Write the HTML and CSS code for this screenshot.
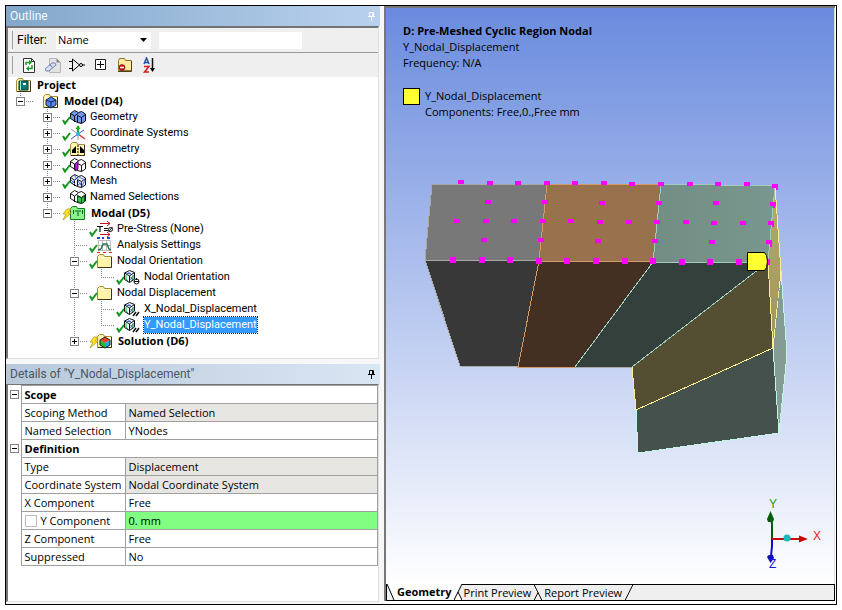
FILE: index.html
```html
<!DOCTYPE html>
<html lang="en">
<head>
<meta charset="utf-8">
<title>Mechanical - Y_Nodal_Displacement</title>
<link rel="stylesheet" href="styles.css">
</head>
<body>
<svg class="defs" aria-hidden="true">
  <symbol id="check" viewBox="0 0 24 16"><path d="M1 11l2 3.500L8 8" fill="none" stroke="#12961c" stroke-width="2"/></symbol>
  <symbol id="bolt" viewBox="0 0 24 16"><path d="M5 4h4L6 8h3L1 15l3-6H1z" fill="#ffe81c" stroke="#b89a20" stroke-width=".8"/></symbol>
  <symbol id="folder" viewBox="0 0 24 16"><path d="M8.500 3.500l2-2h4l1 2h7v11h-14z" fill="#fff3a8" stroke="#a58c37"/><path d="M9.500 4.500h12v9" fill="none" stroke="#fffbd8"/><path d="M9 14.500h13.500V4" fill="none" stroke="#3e3516"/></symbol>
  <symbol id="cubes" viewBox="0 0 24 16"><path d="M8.500 4.500l4-3 4 2 3-1 4 2.500v7l-4 2.500-4-1-3-1.500-4-2.500z" stroke="#111" stroke-linejoin="round"/><path d="M8.500 4.500l4 2.500 4-3M12.500 7v6M15.500 6.500l4 2 4-3M19.500 8.500v6M15.500 6.500v7" fill="none" stroke="#111"/></symbol>
  <symbol id="nodecube" viewBox="0 0 24 16"><path d="M8.500 4l5-2.500 5 2v6.500l-5 3.500-5-3z" fill="#effff0" stroke="#111"/><path d="M8.500 4l5 3 5-3.500M13.500 7v6.500" fill="none" stroke="#111"/><path d="M10 4l5 1M12 2.500l3 3M14.500 8l3 3M17.500 6l-3 5" stroke="#3a58d8"/><path d="M10 6v4l2 2M15 9l2-2v3l-2 2" fill="none" stroke="#1aa638"/></symbol>
  <symbol id="pin" viewBox="0 0 8 10"><path d="M1.500 5.500V1.500h4v4M4.500 1v5M0 5.500h7M3.500 6v4" fill="none" stroke="currentColor"/></symbol>
</svg>
<main class="window">
  <div class="side">
    <section class="panel outline">
      <header class="title"><h2>Outline</h2><button class="pin" aria-label="Pin Outline"><svg><use href="#pin"/></svg></button></header>
      <div class="body">
        <div class="bar filter">
          <label for="by">Filter:</label>
          <div class="combo"><select id="by"><option>Name</option></select><svg viewBox="0 0 8 4"><path d="M0 0h7L3.500 4z"/></svg></div>
          <input type="text" aria-label="Filter text">
        </div>
        <div class="bar tools">
          <button aria-label="Refresh"><svg viewBox="0 0 16 16"><path d="M2.500 1.500h8l3 3v11h-11z" fill="#fff" stroke="#333"/><path d="M10.500 1.500v3h3" fill="none" stroke="#333"/><path d="M5 8V5.500h3M11 8v3.500H8" fill="none" stroke="#159b25" stroke-width="1.500"/><path d="M8 3l3 2.500L8 8zM8 9l-3 2.500L8 14z" fill="#159b25"/></svg></button>
          <button aria-label="Clear"><svg viewBox="0 0 16 16"><path d="M4.500 1.500h7l4 4v10h-11z" fill="#e3e3e3" stroke="#b5b5b5"/><path d="M11.500 1.500v4h4z" fill="#888"/><path d="M0 12l7-6q4-1 4 2l-7 6q-4 1-4-2z" fill="#d8def5" stroke="#7783b8"/><path d="M4 8q3 0 3.500 3" fill="none" stroke="#7783b8"/></svg></button>
          <button aria-label="Model state"><svg viewBox="0 0 16 16"><path d="M0 4.500h3M0 11.500h3M3.500 2v12l7-6zM13 8h3" fill="none" stroke="#000"/><circle cx="12" cy="8" r="1.500" fill="#fff" stroke="#000"/></svg></button>
          <button aria-label="Expand all"><svg viewBox="0 0 16 16"><path d="M2.500 2.500h10v10h-10z" fill="#fff" stroke="#222"/><path d="M4 7.500h7M7.500 4v7" stroke="#000"/></svg></button>
          <button aria-label="Hide folders"><svg viewBox="0 0 16 16"><path d="M1.500 3.500l1-2h5l1 2h6v10h-13z" fill="#ffeaa0" stroke="#8c742a"/><path d="M1 14.500h13.500V4" fill="none" stroke="#4d4120"/><circle cx="5" cy="10.500" r="3" fill="#d5121c" stroke="#6d1014" stroke-width=".6"/><path d="M3 10.500h4" stroke="#fff" stroke-width="1.500"/></svg></button>
          <button aria-label="Sort A to Z"><svg viewBox="0 0 16 16"><path d="M3 7l2.500-6L8 7M4 5.500h3" fill="none" stroke="#2450a8" stroke-width="1.500"/><path d="M3 9.500h5L3.500 15H8" fill="none" stroke="#d21b22" stroke-width="1.500"/><path d="M11.500 1v11" stroke="#111" stroke-width="1.500"/><path d="M9 11h5l-2.500 4z"/></svg></button>
        </div>
        <div class="tree">
          <div class="row"><svg class="ico" viewBox="0 0 24 16"><use href="#folder"/><path d="M11 4h9v9h-9z" fill="#087a70" stroke="#043f3b"/><path d="M12.500 4v9" stroke="#8fe8cf"/><path d="M15 6h3v2h-3z" fill="#fff"/></svg><b>Project</b></div>
          <ul>
            <li><div class="row"><span class="cell"><button class="exp" aria-label="Collapse Model"></button></span><svg class="ico" viewBox="0 0 24 16"><use href="#folder"/><path d="M11 7l5-3 5 3v5l-5 3-5-3z" fill="#5487ed" stroke="#142254"/><path d="M11 7l5 2 5-2M16 9v5" fill="none" stroke="#142254"/></svg><b>Model (D4)</b></div>
              <ul>
                <li><div class="row"><span class="cell"><button class="exp plus" aria-label="Expand Geometry"></button></span><svg class="ico" viewBox="0 0 24 16"><use href="#cubes" fill="#7199ee"/><use href="#check"/></svg><span>Geometry</span></div></li>
                <li><div class="row"><span class="cell"><button class="exp plus" aria-label="Expand Coordinate Systems"></button></span><svg class="ico" viewBox="0 0 24 16"><path d="M16 9V1" stroke="#18ae28" stroke-width="2"/><path d="M13.500 4L16 0l2.500 4z" fill="#18ae28"/><path d="M16 9l-7 5M16 9l6-4" stroke="#3c4ad8"/><path d="M16 9l7 5" stroke="#e03030" stroke-width="1.500"/><path d="M16 9L9 4M16 9v6" stroke="#999"/><circle cx="16" cy="9" r="2" fill="#29b7e8"/><use href="#check"/></svg><span>Coordinate Systems</span></div></li>
                <li><div class="row"><span class="cell"><button class="exp plus" aria-label="Expand Symmetry"></button></span><svg class="ico" viewBox="0 0 24 16"><use href="#folder"/><path d="M10 12V9l4-4v7zM22 12V9l-4-4v7z"/><path d="M16 4v10" stroke="#000" stroke-dasharray="2 1"/><use href="#check"/></svg><span>Symmetry</span></div></li>
                <li><div class="row"><span class="cell"><button class="exp plus" aria-label="Expand Connections"></button></span><svg class="ico" viewBox="0 0 24 16"><use href="#cubes" fill="#fff"/><path d="M13 7l3-3v8l-3 2z" fill="#c61ee8" stroke="#40104c"/><use href="#check"/></svg><span>Connections</span></div></li>
                <li><div class="row"><span class="cell"><button class="exp plus" aria-label="Expand Mesh"></button></span><svg class="ico" viewBox="0 0 24 16"><use href="#cubes" fill="#e8edff"/><path d="M9 7l4 4M9 10l4-3M12 2l4 5M16 8l3 4M16 12l4-3M20 13l3-6M17 4l4 2" stroke="#536be0"/><use href="#check"/></svg><span>Mesh</span></div></li>
                <li><div class="row"><span class="cell"><button class="exp plus" aria-label="Expand Named Selections"></button></span><svg class="ico" viewBox="0 0 24 16"><use href="#cubes" fill="#fff"/><path d="M15.500 7l4 2v5.500l-4-2zM19.500 9l3-2v5.500l-3 2z" fill="#2dc94c" stroke="#0a4e17"/></svg><span>Named Selections</span></div></li>
                <li><div class="row"><span class="cell"><button class="exp" aria-label="Collapse Modal"></button></span><svg class="ico" viewBox="0 0 24 16"><path d="M8.500 3.500l2-2h4l1 2h7v11h-14z" fill="#8cf28c" stroke="#117a22"/><path d="M11.500 5v4M14 5v2M16 5v6M18 5v2M20.500 5v4" stroke="#075a14"/><use href="#bolt"/></svg><b>Modal (D5)</b></div>
                  <ul>
                    <li><div class="row"><span class="cell"></span><svg class="ico" viewBox="0 0 24 16"><path d="M11 2.500h10M11 13.500h10M18 0l3 2.500L18 5M18 11l3 2.500-3 2.500" fill="none" stroke="#c41420"/><path d="M8 5.500h6M11 5v6M15 7.500h4M15 9.500h4" stroke="#111" stroke-width="1.200"/><circle cx="21.500" cy="8.500" r="2" fill="none" stroke="#111"/><path d="M19.500 11l4-5" stroke="#111"/><use href="#check"/></svg><span>Pre-Stress (None)</span></div></li>
                    <li><div class="row"><span class="cell"></span><svg class="ico" viewBox="0 0 24 16"><path d="M9.500 3.500h12v10h-12zM13.500 3v11M17.500 3v11M9 8.500h13" fill="#fff" stroke="#bbb"/><path d="M9 13l3-1 2-5h4l2 5 2 1" fill="none" stroke="#237a50" stroke-width="1.500"/><path d="M8 1h3M13 1h2M18 1h3" stroke="#2b44e0" stroke-width="2"/><path d="M8 15.500h3M14 15.500h3M20 15.500h3" stroke="#d22"/><use href="#check"/></svg><span>Analysis Settings</span></div></li>
                    <li><div class="row"><span class="cell"><button class="exp" aria-label="Collapse Nodal Orientation"></button></span><svg class="ico" viewBox="0 0 24 16"><use href="#folder"/><use href="#check"/></svg><span>Nodal Orientation</span></div>
                      <ul><li><div class="row"><span class="cell"></span><svg class="ico" viewBox="0 0 24 16"><use href="#nodecube"/><circle cx="20.500" cy="12.500" r="2.500" fill="#fff" stroke="#111"/><path d="M18 12.500h5M20.500 9v2" stroke="#111"/><use href="#check"/></svg><span>Nodal Orientation</span></div></li></ul>
                    </li>
                    <li><div class="row"><span class="cell"><button class="exp" aria-label="Collapse Nodal Displacement"></button></span><svg class="ico" viewBox="0 0 24 16"><use href="#folder"/><use href="#check"/></svg><span>Nodal Displacement</span></div>
                      <ul>
                        <li><div class="row"><span class="cell"></span><svg class="ico" viewBox="0 0 24 16"><use href="#nodecube"/><path d="M17 15l3-4M20 15l3-4" stroke="#111" stroke-width="1.500"/><use href="#check"/></svg><span>X_Nodal_Displacement</span></div></li>
                        <li><div class="row"><span class="cell"></span><svg class="ico" viewBox="0 0 24 16"><use href="#nodecube"/><path d="M17 15l3-4M20 15l3-4" stroke="#111" stroke-width="1.500"/><use href="#check"/></svg><span class="selected">Y_Nodal_Displacement</span></div></li>
                      </ul>
                    </li>
                    <li><div class="row"><span class="cell"><button class="exp plus" aria-label="Expand Solution"></button></span><svg class="ico" viewBox="0 0 24 16"><use href="#folder"/><path d="M11 7l5-3 5 3-5 3z" fill="#ef3e28"/><path d="M11 7l5 3v5l-5-3z" fill="#1fba35"/><path d="M21 7l-5 3v5l5-3z" fill="#20a8e8"/><path d="M11 7l5-3 5 3v5l-5 3-5-3z" fill="none" stroke="#222"/><use href="#bolt"/></svg><b>Solution (D6)</b></div></li>
                  </ul>
                </li>
              </ul>
            </li>
          </ul>
        </div>
      </div>
    </section>
    <section class="panel details">
      <header class="title"><h2>Details of "Y_Nodal_Displacement"</h2><button class="pin" aria-label="Pin Details"><svg><use href="#pin"/></svg></button></header>
      <div class="body">
        <table>
          <colgroup><col class="c1"><col class="c2"><col></colgroup>
          <tr><td class="gut"><button class="exp" aria-label="Collapse Scope"></button></td><th colspan="2">Scope</th></tr>
          <tr><td class="gut"></td><td>Scoping Method</td><td class="ro">Named Selection</td></tr>
          <tr><td class="gut"></td><td>Named Selection</td><td>YNodes</td></tr>
          <tr><td class="gut"><button class="exp" aria-label="Collapse Definition"></button></td><th colspan="2">Definition</th></tr>
          <tr><td class="gut"></td><td>Type</td><td class="ro">Displacement</td></tr>
          <tr><td class="gut"></td><td>Coordinate System</td><td class="ro">Nodal Coordinate System</td></tr>
          <tr><td class="gut"></td><td>X Component</td><td>Free</td></tr>
          <tr><td class="gut"></td><td><label class="param"><input type="checkbox">Y Component</label></td><td class="active">0. mm</td></tr>
          <tr><td class="gut"></td><td>Z Component</td><td>Free</td></tr>
          <tr><td class="gut"></td><td>Suppressed</td><td>No</td></tr>
        </table>
      </div>
    </section>
  </div>
  <section class="view">
    <div class="scene">
      <svg class="model" viewBox="386 8 448 576" preserveAspectRatio="xMinYMin meet" role="img" aria-label="Meshed cyclic model">
        <defs>
          <linearGradient id="teal"><stop offset="0" stop-color="#728d84"/><stop offset="1" stop-color="#79978e"/></linearGradient>
          <linearGradient id="strip" x2="0" y2="1"><stop offset="0" stop-color="#b4a96c"/><stop offset="1" stop-color="#a0965c"/></linearGradient>
        </defs>
        <g shape-rendering="crispEdges">
          <path d="M432 184H547L539 261 425 260z" fill="#787878"/>
          <path d="M547 184H661L653 262 539 261z" fill="#98724d"/>
          <path d="M661 184L775 186 768 262H653z" fill="url(#teal)"/>
          <path d="M425 260L539 261 518 367 460 366z" fill="#383838"/>
          <path d="M539 261L653 262 575 367H518z" fill="#433022"/>
          <path d="M653 262H768L632 367H575z" fill="#33403c"/>
          <path d="M632 367L768 262 773 348 636 410z" fill="#544f32"/>
          <path d="M636 410L773 348 779 433 638 453z" fill="#45514d"/>
          <path d="M781 271L787 354 779 433 773 348z" fill="#849c93"/>
          <path d="M775 186L781 271 773 348 768 262z" fill="url(#strip)"/>
          <g fill="none">
            <path d="M547 184H432L425 260 539 261M425 260L460 366 518 367M575 367H632" stroke="#a8a8a4"/>
            <path d="M661 184H547L539 261 518 367H575M539 261L653 262" stroke="#d49b6a"/>
            <path d="M661 184L775 186 768 262H653L661 184M653 262L575 367M768 262L632 367" stroke="#a0cbbd"/>
            <path d="M781 271L787 354 779 433 773 348M779 433L638 453 636 410" stroke="#c3f5e5"/>
            <path d="M775 186L781 271 773 348 768 262M773 348L636 410 632 367" stroke="#ffef94"/>
            <path d="M780 278l-5 55" stroke="#829c93" stroke-dasharray="3 7"/>
          </g>
          <path stroke="#f0f" stroke-width="4" d="M458 182h6m23 1h6m22 0h6m23 0h6m22 0h6m23 0h6m22 1h6m23 0h6m23 0h6m22 0h6m23 0h6m22 2h6M485 202h6m51 0h6m51 1h6m51 0h6m51 0h6m51 1h6M454 221h6m23 0h6m22 0h6m23 0h6m22 0h6m23 1h6m23 0h6m22 0h6m23 0h6m22 1h6m23 0h6m22 0h6M481 240h6m51 0h6m51 1h6m51 0h6m51 1h6m51 0h6"/>
          <path stroke="#f0f" stroke-width="6" d="M450 260h6m23 0h6m22 0h6m23 1h6m22 0h6m23 0h6m23 0h6m22 0h6m23 1h6m22 0h6m23 0h6m23 0h5"/>
          <path d="M773 187h5v3h-2v-2zM773 206h2v2h-2M772 225h2v2h-2M770 244h2v3h-2" fill="#f0f"/>
        </g>
        <path d="M747.500 252.500h17l2 3 1 6-1 6-2 3h-17z" fill="#ffff32" stroke="#000"/>
        <path d="M772 539V524l-1-8" fill="none" stroke="#055c08" stroke-width="2"/>
        <path d="M767 519l3.500-8 3.500 8-1 3h-5z" fill="#075e0a"/>
        <path d="M772 539v7l-1 10" fill="none" stroke="#0c0cc8" stroke-width="2"/>
        <path d="M767 557q1-3 6-2l1 3-3.500 5z" fill="#1010b4"/>
        <path d="M772 539h28" stroke="#c40c0c" stroke-width="2"/>
        <path d="M799 535.500l9 3.500-9 3.500z" fill="#c80808"/>
        <circle cx="787" cy="538" r="3.500" fill="#18b8bc"/>
        <g font-family="Liberation Sans" font-size="12"><text x="769" y="508" fill="#18a01c">Y</text><text x="813" y="540" fill="#f01818">X</text><text x="769" y="568" fill="#1818e8">Z</text></g>
      </svg>
      <div class="notes">
        <h1>D: Pre-Meshed Cyclic Region Nodal</h1>
        <p>Y_Nodal_Displacement</p>
        <p>Frequency: N/A</p>
        <div class="legend"><span class="swatch"></span><div><p>Y_Nodal_Displacement</p><p>Components: Free,0.,Free mm</p></div></div>
      </div>
    </div>
    <nav class="tabs">
      <svg viewBox="0 0 8 16"><path d="M0 0l7 16H0z" fill="#efefef"/><path d="M0 0l7 16" stroke="#000"/></svg>
      <button class="current">Geometry</button>
      <svg viewBox="0 0 8 16"><path d="M8 0v16L4 8z" fill="#efefef"/><path d="M0 16L8 0M4 8l4 8" stroke="#000" fill="none"/></svg>
      <button>Print Preview</button>
      <svg class="grey" viewBox="0 0 8 16"><path d="M0 0l8 16M0 16l4-8" stroke="#000" fill="none"/></svg>
      <button>Report Preview</button>
      <svg class="grey" viewBox="0 0 8 16"><path d="M0 16L8 0" stroke="#000"/></svg>
      <span class="rest"></span>
    </nav>
  </section>
</main>
</body>
</html>
```
FILE: styles.css
```css
* { box-sizing: border-box; }
body {
  margin: 0;
  padding: 5px;
  min-height: 100vh;
  display: flex;
  background: #fff;
  color: #000;
  font: 11px/16px "Open Sans", "Noto Sans", sans-serif;
}
h1, h2, p, ul { margin: 0; padding: 0; font-size: inherit; }
ul { list-style: none; }
button, input, select { font: inherit; color: inherit; margin: 0; padding: 0; border: 0; background: none; }
svg { display: block; }
.defs { position: absolute; width: 0; height: 0; }

.window {
  flex: 1;
  display: grid;
  grid-template-columns: 378px minmax(0, 1fr);
  border: 1px solid #000;
}
.side {
  display: flex;
  flex-direction: column;
  gap: 5px;
  padding: 0 4px 2px 0;
  background: #f7f7f7;
}
.panel { display: flex; flex-direction: column; }
.details { flex: 1; }
.title {
  display: flex;
  align-items: center;
  justify-content: space-between;
  height: 20px;
  padding: 0 4px;
  font: 12px/20px Roboto, "Open Sans", sans-serif;
}
.title h2 { font-weight: 400; }
.outline .title { background: linear-gradient(90deg, #82a7ca, #b9d1ee); color: #f5f9fd; }
.details .title { background: linear-gradient(90deg, #b8c8da, #d9e6f4); color: #4b5763; }
.pin { color: #fff; }
.details .pin { color: #000; }
.pin svg { width: 8px; height: 10px; }
.body {
  flex: 1;
  margin-right: 1px;
  border: 1px solid #e0e0e0;
  border-top: 2px solid #737373;
  border-left: 2px solid #777;
  background: #fff;
}
.details .body { border-top-width: 1px; }

.bar { display: flex; align-items: center; background: #efefef; }
.bar::before { content: ""; width: 1px; height: 18px; margin: 0 4px; background: #a0a0a0; }
.filter { height: 25px; border-bottom: 1px solid #999; font: 12px/16px Roboto, "Open Sans", sans-serif; }
.filter label { width: 39px; }
.combo { display: grid; align-items: center; width: 95px; height: 17px; background: #fff; font: 11px/16px "Open Sans", sans-serif; }
.combo > * { grid-area: 1 / 1; }
.combo select { appearance: none; width: 100%; padding-left: 2px; }
.combo svg { width: 8px; height: 4px; justify-self: end; margin-right: 3px; pointer-events: none; }
.filter input { width: 143px; height: 17px; margin-left: 8px; background: #fff; }
.tools { height: 24px; gap: 8px; }
.tools::before { margin-right: 0; }
.tools svg { width: 16px; height: 16px; }

.tree { padding-bottom: 9px; font-family: Roboto, "Open Sans", sans-serif; }
.tree b { font-family: "Open Sans", sans-serif; padding-left: 1px; }
.row { display: flex; align-items: center; height: 16px; }
.ico { width: 24px; height: 16px; margin-right: 4px; flex: none; }
.tree ul ul { margin-left: 27px; }
.tree li { background: repeating-linear-gradient(#888 0 1px, #fff 1px 2px) 12px 0 / 1px 100% no-repeat; }
.tree li:last-child { background-size: 1px 8px; }
.cell {
  width: 27px;
  height: 16px;
  padding: 4px 0 0 8px;
  background: repeating-linear-gradient(90deg, #888 0 1px, #fff 1px 2px) 12px 8px / 14px 1px no-repeat;
}
.exp {
  display: block;
  width: 9px;
  height: 9px;
  border: 1px solid #848484;
  background: linear-gradient(#000, #000) center / 5px 1px no-repeat #fff;
}
.plus {
  background:
    linear-gradient(#000, #000) center / 5px 1px no-repeat,
    linear-gradient(#000, #000) center / 1px 5px no-repeat #fff;
}
.selected { background: #3399ff; color: #fff; outline: 1px dotted #22262b; }

table { width: 100%; table-layout: fixed; border-collapse: collapse; }
.c1 { width: 13px; }
.c2 { width: 104px; }
td, th {
  height: 18px;
  padding: 0 0 0 3px;
  border: 1px solid #a0a0a0;
  line-height: 16px;
  text-align: left;
  white-space: nowrap;
}
.gut { border-width: 0 1px 0 0; padding: 0 0 0 2px; }
.ro { background: #e8e6e3; }
.active { background: #82ff82; }
.param { display: flex; align-items: center; gap: 4px; }
.param input { appearance: none; width: 12px; height: 12px; border: 1px solid #bbb; background: #fff; }

.view {
  display: flex;
  flex-direction: column;
  margin: 0 1px 3px 0;
  border: 2px solid #777;
  border-width: 2px 0 0 2px;
}
.scene { flex: 1; display: grid; background: linear-gradient(#6a8bde, #fff); border-right: 1px solid #ddd; }
.scene > * { grid-area: 1 / 1; }
.model { width: 100%; height: 100%; }
.notes { padding: 15px 17px; }
.legend { display: flex; align-items: flex-start; gap: 5px; margin-top: 17px; }
.swatch { width: 17px; height: 17px; border: 1px solid #000; background: #ffff32; }
.tabs { display: flex; height: 17px; border: 1px solid #000; border-top: 0; background: #fff; }
.tabs svg { width: 8px; height: 16px; flex: none; }
.tabs button { padding: 0 3px 0 2px; white-space: nowrap; }
.tabs .current { padding: 0 2px; font-weight: 700; }
.tabs button:not(.current), .grey, .rest { background: #efefef; border-top: 1px solid #000; }
.rest { flex: 1; }
```
